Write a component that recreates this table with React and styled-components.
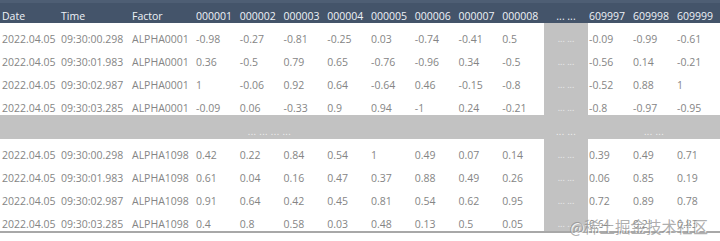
import React from "react";
import styled, { createGlobalStyle } from "styled-components";

const GlobalStyle = createGlobalStyle`
  body {
    margin: 0;
    background: #ffffff;
    font-family: "Open Sans", "Liberation Sans", sans-serif;
    -webkit-font-smoothing: antialiased;
  }
`;

const COLS = "59px 71px 64px repeat(8, 43.75px) 44px repeat(3, 44px)";

const firstBlock = [
  ["09:30:00.298", ["-0.98", "-0.27", "-0.81", "-0.25", "0.03", "-0.74", "-0.41", "0.5"], ["-0.09", "-0.99", "-0.61"]],
  ["09:30:01.983", ["0.36", "-0.5", "0.79", "0.65", "-0.76", "-0.96", "0.34", "-0.5"], ["-0.56", "0.14", "-0.21"]],
  ["09:30:02.987", ["1", "-0.06", "0.92", "0.64", "-0.64", "0.46", "-0.15", "-0.8"], ["-0.52", "0.88", "1"]],
  ["09:30:03.285", ["-0.09", "0.06", "-0.33", "0.9", "0.94", "-1", "0.24", "-0.21"], ["-0.8", "-0.97", "-0.95"]],
];

const secondBlock = [
  ["09:30:00.298", ["0.42", "0.22", "0.84", "0.54", "1", "0.49", "0.07", "0.14"], ["0.39", "0.49", "0.71"]],
  ["09:30:01.983", ["0.61", "0.04", "0.16", "0.47", "0.37", "0.88", "0.49", "0.26"], ["0.06", "0.85", "0.19"]],
  ["09:30:02.987", ["0.91", "0.64", "0.42", "0.45", "0.81", "0.54", "0.62", "0.95"], ["0.72", "0.89", "0.78"]],
  ["09:30:03.285", ["0.4", "0.8", "0.58", "0.03", "0.48", "0.13", "0.5", "0.05"], ["0.64", "0.21", "0.83"]],
];

const leadCodes = ["000001", "000002", "000003", "000004", "000005", "000006", "000007", "000008"];
const tailCodes = ["609997", "609998", "609999"];

const Sheet = styled.div`
  position: relative;
  width: 720px;
  height: 241px;
  overflow: hidden;
`;

const Table = styled.div`
  width: 720px;
  border-bottom: 2px solid #a8a8a8;
`;

const Row = styled.div`
  display: grid;
  grid-template-columns: ${COLS};
  height: ${(p) => (p.band ? 24 : 23)}px;
  background: ${(p) => (p.header ? "#44546a" : p.band ? "#c2c2c2" : "#ffffff")};
  box-shadow: ${(p) => (p.header ? "inset 0 3px 0 #4e5e74" : "none")};
`;

const Cell = styled.div`
  display: flex;
  align-items: flex-end;
  padding-left: ${(p) => (p.inset != null ? p.inset : 2)}px;
  color: ${(p) => (p.header ? "#eef2f7" : "#858585")};
  font-size: 10.5px;
  line-height: 14px;
  white-space: nowrap;
  overflow: visible;
`;

const GapCell = styled.div`
  display: flex;
  align-items: flex-end;
  justify-content: center;
  background: ${(p) => (p.header ? "transparent" : "#c2c2c2")};
  color: ${(p) => (p.header ? "#eef2f7" : "#ececec")};
  font-size: ${(p) => (p.header ? 10.5 : 9)}px;
  line-height: ${(p) => (p.header ? 14 : 13)}px;
  padding-bottom: ${(p) => (p.header ? 0 : 1)}px;
  white-space: nowrap;
`;

const BandDots = styled.div`
  display: flex;
  align-items: flex-end;
  justify-content: ${(p) => (p.center ? "center" : "flex-start")};
  padding-left: ${(p) => p.inset || 0}px;
  padding-bottom: 1px;
  grid-column: ${(p) => p.col};
  color: #f2f2f2;
  font-size: 9.5px;
  line-height: 13px;
  letter-spacing: 0.4px;
  white-space: nowrap;
`;

const Watermark = styled.div`
  position: absolute;
  right: 12px;
  top: 216px;
  font-family: "Noto Sans CJK SC", "Noto Sans", sans-serif;
  font-size: 15.5px;
  line-height: 20px;
  color: rgba(140, 140, 140, 0.7);
  text-shadow: 1px 1px 0 rgba(255, 255, 255, 0.85);
`;

const DataRow = ({ time, factor, lead, tail }) => (
  <Row>
    <Cell>2022.04.05</Cell>
    <Cell>{time}</Cell>
    <Cell>{factor}</Cell>
    {lead.map((v, i) => (
      <Cell key={"l" + i}>{v}</Cell>
    ))}
    <GapCell>... ...</GapCell>
    {tail.map((v, i) => (
      <Cell key={"t" + i} inset={1}>
        {v}
      </Cell>
    ))}
  </Row>
);

const App = () => {
  return (
    <>
      <GlobalStyle />
      <Sheet>
        <Table>
          <Row header>
            <Cell header>Date</Cell>
            <Cell header>Time</Cell>
            <Cell header>Factor</Cell>
            {leadCodes.map((c) => (
              <Cell header key={c}>
                {c}
              </Cell>
            ))}
            <GapCell header>... ...</GapCell>
            {tailCodes.map((c) => (
              <Cell header key={c} inset={1}>
                {c}
              </Cell>
            ))}
          </Row>

          {firstBlock.map(([time, lead, tail]) => (
            <DataRow key={"a" + time} time={time} factor="ALPHA0001" lead={lead} tail={tail} />
          ))}

          <Row band>
            <BandDots col="5 / 7" inset={10}>
              ... ... ... ...
            </BandDots>
            <BandDots col="12 / 13" center>
              ... ...
            </BandDots>
            <BandDots col="14 / 15" center>
              ... ...
            </BandDots>
          </Row>

          {secondBlock.map(([time, lead, tail]) => (
            <DataRow key={"b" + time} time={time} factor="ALPHA1098" lead={lead} tail={tail} />
          ))}
        </Table>
        <Watermark>@稀土掘金技术社区</Watermark>
      </Sheet>
    </>
  );
};

export default App;
